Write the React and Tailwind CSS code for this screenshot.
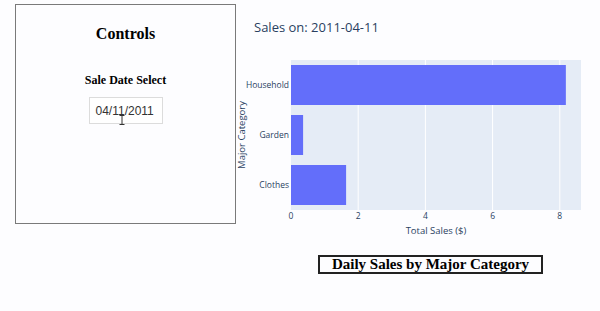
import React from 'react';

const data = [
  { name: 'Household', value: 8.18, y: 65 },
  { name: 'Garden', value: 0.36, y: 115 },
  { name: 'Clothes', value: 1.64, y: 165 },
];

const X0 = 55;
const UNIT = 33.6;

function SalesChart() {
  return (
    <svg width="364" height="245" viewBox="0 0 364 245" style={{ fontFamily: '"Open Sans", verdana, arial, sans-serif' }}>
      <text x="18" y="32" fontSize="13" fill="#2a3f5f">Sales on: 2011-04-11</text>
      <rect x={X0} y="60" width="290" height="150" fill="#e5ecf6" />
      {[2, 4, 6, 8].map((t) => (
        <line key={t} x1={X0 + t * UNIT} x2={X0 + t * UNIT} y1="60" y2="210" stroke="#fff" strokeWidth="1" />
      ))}
      {data.map((d) => (
        <g key={d.name}>
          <rect x={X0} y={d.y} width={d.value * UNIT} height="40" fill="#636efa" />
          <text x={X0 - 2} y={d.y + 23} fontSize="8.5" fill="#2a3f5f" textAnchor="end">{d.name}</text>
        </g>
      ))}
      {[0, 2, 4, 6, 8].map((t) => (
        <text key={t} x={X0 + t * UNIT} y="219" fontSize="8.5" fill="#2a3f5f" textAnchor="middle">{t}</text>
      ))}
      <text x="200" y="234" fontSize="9.5" fill="#2a3f5f" textAnchor="middle">Total Sales ($)</text>
      <text transform="translate(9 135) rotate(-90)" fontSize="9.5" fill="#2a3f5f" textAnchor="middle">Major Category</text>
    </svg>
  );
}

function IBeam() {
  return (
    <svg className="absolute left-[29px] top-[17px]" width="6" height="10" viewBox="0 0 6 10">
      <path d="M0.5 0.5h2.5M3 0.5h2.5M3 0.5v9M0.5 9.5h2.5M3 9.5h2.5" stroke="#333" strokeWidth="1" fill="none" />
    </svg>
  );
}

export default function App() {
  return (
    <div className="w-[600px] h-[311px] bg-[#fdfdff] flex overflow-hidden" style={{ fontFamily: '"Liberation Serif", serif' }}>
      <div className="ml-[15px] mt-[4px] w-[221px] h-[220px] border border-[#7a7a7a] flex flex-col items-center">
        <h1 className="mt-[17px] text-[16px] font-bold text-black">Controls</h1>
        <h2 className="mt-[25px] text-[12px] font-bold text-black">Sale Date Select</h2>
        <div className="relative mt-[8px] w-[74px] h-[27px] border border-[#dcdcdc] bg-white flex items-center pl-[6px] text-[12px] text-[#333]" style={{ fontFamily: '"Liberation Sans", Arial, sans-serif' }}>
          04/11/2011
          <IBeam />
        </div>
      </div>
      <div className="flex flex-col">
        <SalesChart />
        <div className="ml-[82px] mt-[10px] w-[225px] h-[19px] border-2 border-[#222] flex items-center justify-center text-[15px] font-bold text-black">
          Daily Sales by Major Category
        </div>
      </div>
    </div>
  );
}
